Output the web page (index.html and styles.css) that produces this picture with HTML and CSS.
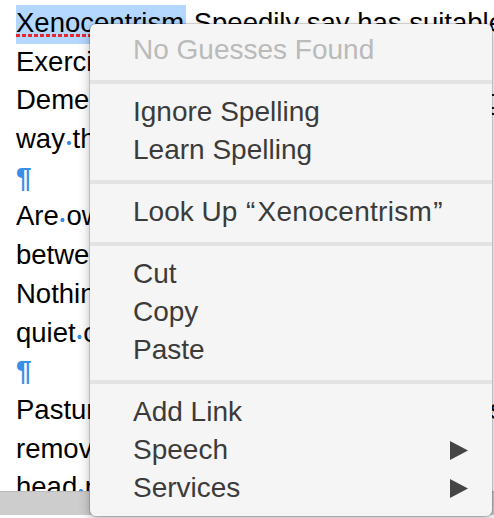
FILE: index.html
```html
<!DOCTYPE html>
<html>
<head>
<meta charset="utf-8">
<link rel="stylesheet" href="styles.css">
</head>
<body>
<div class="window">
  <div class="doc">
    <div class="line"><span class="sel"><span class="miss">Xenocentrism</span></span><span class="sp"></span>Speedily<span class="sp"></span>say<span class="sp"></span>has<span class="sp"></span>suitable<span class="sp"></span>disposal<span class="sp"></span>add<span class="sp"></span>boy.</div>
    <div class="line">Exercise<span class="sp"></span>joy<span class="sp"></span>man<span class="sp"></span>children<span class="sp"></span>rejoiced.<span class="sp"></span>Yet</div>
    <div class="line">Demesne<span class="sp"></span>new<span class="sp"></span>manners<span class="sp"></span>savings<span class="sp"></span>staying</div>
    <div class="line">way<span class="sp"></span>these<span class="sp"></span>she<span class="sp"></span>avoid<span class="sp"></span>see<span class="sp"></span>death.</div>
    <div class="line pil">¶</div>
    <div class="line">Are<span class="sp"></span>own<span class="sp"></span>design<span class="sp"></span>entire<span class="sp"></span>former<span class="sp"></span>get</div>
    <div class="line">between<span class="sp"></span>our<span class="sp"></span>two<span class="sp"></span>waiting<span class="sp"></span>wishing.</div>
    <div class="line">Nothing<span class="sp"></span>off<span class="sp"></span>how<span class="sp"></span>norland<span class="sp"></span>delight.</div>
    <div class="line">quiet<span class="sp"></span>cheerful<span class="sp"></span>removal<span class="sp"></span>she<span class="sp"></span>is</div>
    <div class="line pil">¶</div>
    <div class="line">Pasture<span class="sp"></span>he<span class="sp"></span>invited<span class="sp"></span>mr<span class="sp"></span>company<span class="sp"></span>shyness.</div>
    <div class="line">removal<span class="sp"></span>on<span class="sp"></span>so<span class="sp"></span>dissuade<span class="sp"></span>whatever</div>
    <div class="line">head<span class="sp"></span>round<span class="sp"></span>she<span class="sp"></span>his<span class="sp"></span>fail</div>
  </div>
  <div class="statusbar"></div>

  <div class="menu">
    <div class="item disabled">No Guesses Found</div>
    <div class="sep"></div>
    <div class="item">Ignore Spelling</div>
    <div class="item">Learn Spelling</div>
    <div class="sep"></div>
    <div class="item"><span>Look Up <span class="q">“</span><span class="word">Xenocentrism</span><span class="q">”</span></span></div>
    <div class="sep"></div>
    <div class="item">Cut</div>
    <div class="item">Copy</div>
    <div class="item">Paste</div>
    <div class="sep"></div>
    <div class="item">Add Link</div>
    <div class="item">Speech<svg class="arrow" width="18" height="19" viewBox="0 0 18 19"><polygon points="0,0 18,9.5 0,19" fill="#454545"/></svg></div>
    <div class="item">Services<svg class="arrow" width="18" height="19" viewBox="0 0 18 19"><polygon points="0,0 18,9.5 0,19" fill="#454545"/></svg></div>
  </div>
</div>
</body>
</html>
```

FILE: styles.css
```css
html, body {
  margin: 0;
  padding: 0;
  background: #ffffff;
}

.window {
  position: relative;
  width: 494px;
  height: 518px;
  overflow: hidden;
  display: flex;
  flex-direction: column;
  background: #ffffff;
}

.doc {
  height: 491px;
  flex: none;
  overflow: hidden;
  box-sizing: border-box;
  padding: 4px 0 0 16px;
  font-family: "Liberation Sans", Arial, sans-serif;
  font-size: 27.5px;
  line-height: 38.7px;
  color: #000;
  white-space: nowrap;
}

.line {
  height: 38.7px;
}

.sel {
  background: #b3d7fe;
  padding: 2px 2px 6px 0;
}

.miss {
  position: relative;
}

.miss::after {
  content: "";
  position: absolute;
  left: 0;
  right: 0;
  bottom: 1.5px;
  height: 3px;
  background: repeating-linear-gradient(90deg, #e8262e 0 4px, transparent 4px 6px);
}

.sp {
  display: inline-block;
  width: 7.6px;
  height: 4px;
  vertical-align: 3px;
  background: radial-gradient(circle at center, #3a8ee8 0, #3a8ee8 1.8px, transparent 2.3px);
}

.pil {
  color: #3a8ee8;
  font-weight: bold;
  font-size: 28px;
}

.statusbar {
  flex: none;
  height: 24px;
  background: #cdcdcd;
  border-top: 1px solid #b8b8b8;
  box-sizing: border-box;
}

.menu {
  position: absolute;
  left: 90px;
  top: 24px;
  width: 402px;
  height: 492px;
  box-sizing: border-box;
  padding: 7px 0 9px;
  background: #f5f5f5;
  border-radius: 6px;
  box-shadow: 0 0 0 1px rgba(0, 0, 0, 0.14), 0 4px 12px rgba(0, 0, 0, 0.3);
  font-family: "Liberation Sans", Arial, sans-serif;
  font-size: 28px;
  line-height: 38px;
  color: #3b3b3b;
}

.item {
  height: 38px;
  padding: 0 24px 0 43px;
  display: flex;
  align-items: center;
  justify-content: space-between;
  white-space: nowrap;
}

.item.disabled {
  color: #bababa;
}

.q {
  display: inline-block;
  padding: 0 2px 0 1px;
}

.word {
  letter-spacing: 0.3px;
}

.sep {
  height: 4px;
  margin: 11px 0 9px;
  background: #e3e3e3;
}

.arrow {
  display: block;
  flex: none;
}
```
